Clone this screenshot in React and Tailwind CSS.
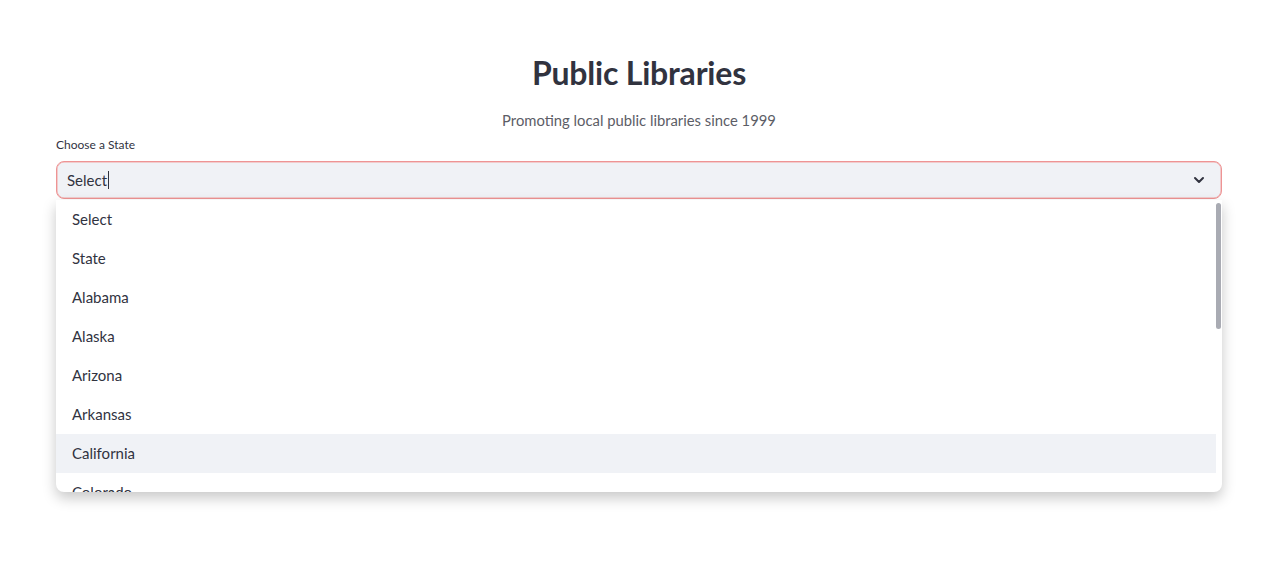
import { ChevronDown } from 'lucide-react';

const states = ['Select', 'State', 'Alabama', 'Alaska', 'Arizona', 'Arkansas', 'California', 'Colorado'];

export default function App() {
  return (
    <div className="min-h-screen bg-white text-[#31333f]" style={{ fontFamily: 'Lato, "Noto Sans", sans-serif' }}>
      <div className="pl-[56px] pr-[58px] pt-[52px]">
        <h1 className="text-center text-[32px] font-bold leading-[42px] tracking-[-0.2px]">Public Libraries</h1>
        <p className="mt-[15px] text-center text-[14.8px] leading-[22px] text-[#5c5d66]">
          Promoting local public libraries since 1999
        </p>
        <p className="mt-[5px] text-[12px] leading-[18px]">Choose a State</p>

        <div className="relative mt-[7px]">
          <div className="flex h-[38px] items-center justify-between rounded-[8px] border border-[#ee9494] bg-[#f0f2f6] pl-[10px] pr-[14px] shadow-[inset_0_0_0_0.5px_#f2a5a5]">
            <div className="flex items-center text-[15px]">
              <span>Select</span>
              <span className="ml-[1px] inline-block h-[18px] w-px bg-[#31333f]" />
            </div>
            <ChevronDown size={16} strokeWidth={3} className="text-[#31333f]" />
          </div>

          <div className="absolute left-0 right-0 top-[39px] h-[292px] overflow-hidden rounded-b-[8px] bg-white shadow-[0_6px_14px_rgba(0,0,0,0.22)]">
            <div className="pr-[6px]">
              {states.map((name) => (
                <div
                  key={name}
                  className={`flex h-[39px] items-center pl-[16px] text-[15px] ${name === 'California' ? 'bg-[#f0f2f6]' : ''}`}
                >
                  {name}
                </div>
              ))}
            </div>
            <div className="absolute right-[1px] top-[3px] h-[126px] w-[5px] rounded-full bg-[#a9abb3]" />
          </div>
        </div>
      </div>
    </div>
  );
}
